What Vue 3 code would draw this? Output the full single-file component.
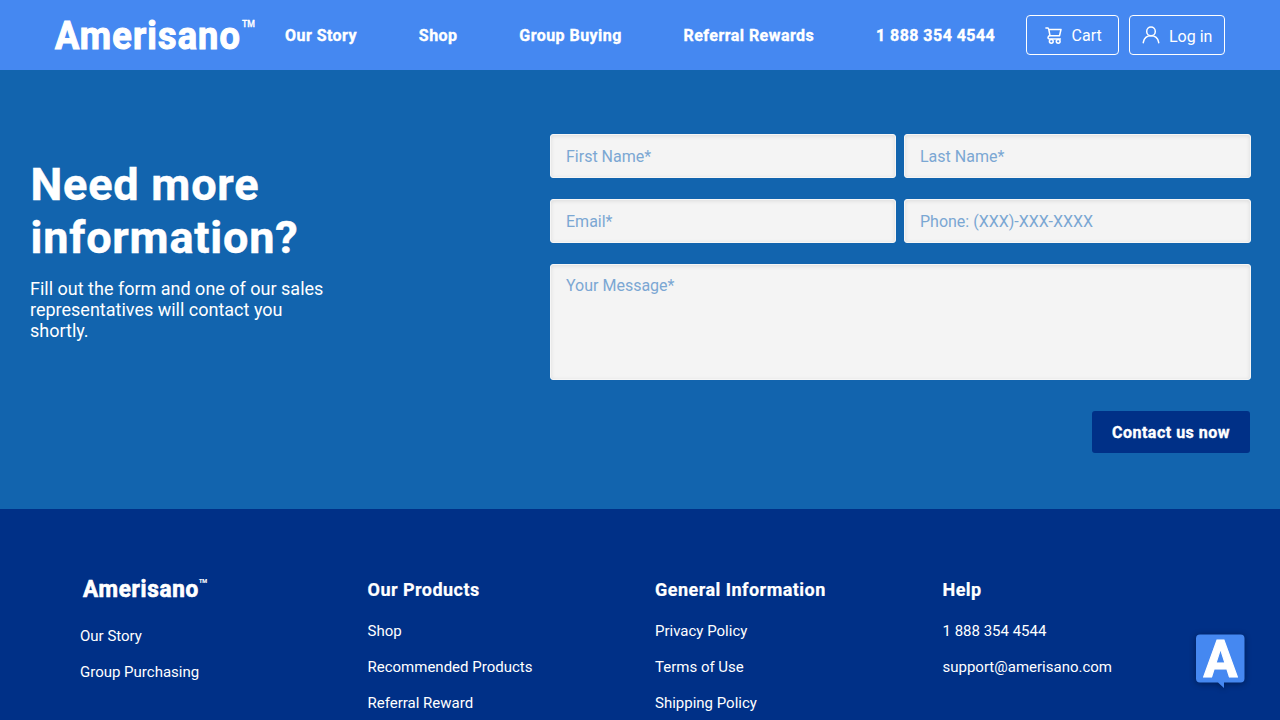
<script setup>
const nav = ['Our Story', 'Shop', 'Group Buying', 'Referral Rewards', '1 888 354 4544']
const columns = [
  { title: 'Our Products', links: ['Shop', 'Recommended Products', 'Referral Reward'] },
  { title: 'General Information', links: ['Privacy Policy', 'Terms of Use', 'Shipping Policy'] },
  { title: 'Help', links: ['1 888 354 4544', 'support@amerisano.com'] },
]
</script>

<template>
  <div class="page">
    <header class="header">
      <svg class="logo" width="202" height="44" viewBox="0 0 202 44" fill="#fff">
        <text class="brand" x="0" y="35.600" font-size="38" textLength="186" lengthAdjust="spacingAndGlyphs">Amerisano</text>
        <text class="mark" x="187" y="14" font-size="9" textLength="13" lengthAdjust="spacingAndGlyphs">TM</text>
      </svg>
      <nav class="nav">
        <a v-for="item in nav" :key="item">{{ item }}</a>
      </nav>
      <div class="actions">
        <button class="outline cart">
          <svg width="18" height="18" viewBox="0 0 18 18" fill="none" stroke="#fff" stroke-width="1.5" stroke-linecap="round" stroke-linejoin="round">
            <path d="M.9 1h2.200l.7 1.500L5 8.700h9.500L16 2.500H4M5 8.700c-2.300 0-2.800 3.300-.3 3.300h10.700" />
            <circle cx="6.300" cy="14.300" r="1.900" />
            <circle cx="13.200" cy="14.300" r="1.900" />
          </svg>
          <span>Cart</span>
        </button>
        <button class="outline login">
          <svg width="18" height="18" viewBox="0 0 18 18" fill="none" stroke="#fff" stroke-width="1.500" stroke-linecap="round">
            <circle cx="9" cy="5.400" r="4.300" />
            <path d="M1.300 16.700v-.4c.8-4 3.700-6.500 7.700-6.500s6.900 2.500 7.700 6.500v.4" />
          </svg>
          <span>Log in</span>
        </button>
      </div>
    </header>

    <main class="contact">
      <section class="intro">
        <h1>Need more information?</h1>
        <p>Fill out the form and one of our sales representatives will contact you shortly.</p>
      </section>
      <form class="form" @submit.prevent>
        <input placeholder="First Name*" />
        <input placeholder="Last Name*" />
        <input placeholder="Email*" />
        <input placeholder="Phone: (XXX)-XXX-XXXX" />
        <textarea placeholder="Your Message*"></textarea>
        <button class="submit">Contact us now</button>
      </form>
    </main>

    <footer class="footer">
      <div class="col first">
        <svg class="foot-logo" width="126" height="28" viewBox="0 0 202 44.900" fill="#fff">
          <text class="brand" x="0" y="34.600" font-size="38" textLength="186" lengthAdjust="spacingAndGlyphs">Amerisano</text>
          <text class="mark" x="186" y="13" font-size="9" textLength="13" lengthAdjust="spacingAndGlyphs">TM</text>
        </svg>
        <a>Our Story</a>
        <a>Group Purchasing</a>
      </div>
      <div v-for="col in columns" :key="col.title" class="col">
        <h3>{{ col.title }}</h3>
        <a v-for="link in col.links" :key="link">{{ link }}</a>
      </div>
    </footer>

    <svg class="chat" width="50" height="62" viewBox="0 0 50 62">
      <path d="M4 .5h40.500q4 0 4 4v40q0 4-4 4H28v5.500L22 48.500H4q-4 0-4-4v-40q0-4 4-4z" fill="#4588f1" />
      <text class="brand" x="7.500" y="42.500" font-size="51" fill="#fff" textLength="34" lengthAdjust="spacingAndGlyphs">A</text>
    </svg>
  </div>
</template>

<style>
html,
body {
  margin: 0;
  overflow: hidden;
}
</style>

<style scoped>
.page {
  height: 720px;
  overflow: hidden;
  display: flex;
  flex-direction: column;
  color: #fff;
  font-family: Roboto, sans-serif;
  background: #003087;
}
.page * {
  box-sizing: border-box;
}
svg {
  overflow: visible;
}
.brand {
  font-family: Roboto, sans-serif;
  font-weight: 700;
  stroke: #fff;
  stroke-width: 1.1px;
}
.logo .brand,
.foot-logo .brand {
  letter-spacing: 1.2px;
}
.mark {
  font-family: Roboto, sans-serif;
  font-weight: 500;
  stroke: #fff;
  stroke-width: 0.3px;
}
.header {
  flex: none;
  height: 70px;
  padding: 0 55px;
  display: flex;
  align-items: center;
  background: #4588f1;
}
.logo {
  flex: none;
}
.nav {
  display: flex;
  gap: 61.8px;
  margin: 2px 0 0 28px;
  font-size: 16px;
  font-weight: 700;
  letter-spacing: 0.45px;
  line-height: 20px;
  white-space: nowrap;
  -webkit-text-stroke: 0.35px #fff;
}
.actions {
  display: flex;
  gap: 10px;
  margin-left: auto;
}
.outline {
  height: 40px;
  display: flex;
  align-items: center;
  padding: 0;
  border: 1px solid #fff;
  border-radius: 4px;
  background: none;
  color: #fff;
  font: 400 16px/20px Roboto, sans-serif;
}
.outline svg {
  flex: none;
}
.cart {
  width: 93px;
  padding-left: 17.5px;
  gap: 9.1px;
}
.cart svg {
  margin-top: 2px;
}
.cart span {
  margin-top: 2px;
}
.login {
  width: 96px;
  padding-left: 12px;
  gap: 9px;
}
.login span {
  margin-top: 4px;
}
.contact {
  flex: none;
  height: 439px;
  padding: 64px 29px 0 30px;
  display: flex;
  justify-content: space-between;
  background: #1264ae;
}
.intro {
  width: 310px;
  padding-top: 24px;
}
h1 {
  margin: 0 0 0 0.5px;
  font-size: 45px;
  line-height: 53px;
  font-weight: 700;
  letter-spacing: 0.8px;
  -webkit-text-stroke: 0.5px #fff;
}
.intro p {
  margin: 14px 0 0;
  font-size: 18px;
  line-height: 21px;
}
.form {
  width: 701px;
  display: grid;
  grid-template-columns: 346px 347px;
  grid-template-rows: 44px 44px 116px 42px;
  column-gap: 8px;
  row-gap: 21px;
}
input,
textarea {
  width: 100%;
  height: 100%;
  border: 1px solid #f6f6f6;
  border-radius: 3px;
  background: #f4f4f4;
  box-shadow: inset 0 1px 4px rgba(0, 0, 0, 0.1);
  padding: 0 15px;
  font: 400 16px/20px Roboto, sans-serif;
  resize: none;
}
textarea {
  grid-column: 1 / 3;
  padding-top: 11px;
  display: block;
}
::placeholder {
  color: #7ba7d3;
  opacity: 1;
}
.submit {
  grid-column: 1 / 3;
  justify-self: end;
  width: 158px;
  height: 42px;
  margin: 10px 1px 0 0;
  padding: 2px 0 0;
  border: 0;
  border-radius: 3px;
  background: #003087;
  color: #fff;
  font: 700 16px/20px Roboto, sans-serif;
  letter-spacing: 0.5px;
  -webkit-text-stroke: 0.35px #fff;
}
.footer {
  padding: 70px 50px 0 80px;
  display: grid;
  grid-template-columns: repeat(4, 287.5px);
}
.col {
  display: flex;
  flex-direction: column;
}
.col h3 {
  margin: 0 0 21px;
  font-size: 18px;
  line-height: 22px;
  font-weight: 700;
  letter-spacing: 0.47px;
  -webkit-text-stroke: 0.2px #fff;
}
.col a {
  font-size: 15px;
  line-height: 18px;
  margin-bottom: 18px;
}
.foot-logo {
  margin: -4px 0 24px 3px;
}
.chat {
  position: absolute;
  left: 1196px;
  top: 634px;
  filter: drop-shadow(0 1px 3px rgba(0, 0, 0, 0.4));
}
</style>
